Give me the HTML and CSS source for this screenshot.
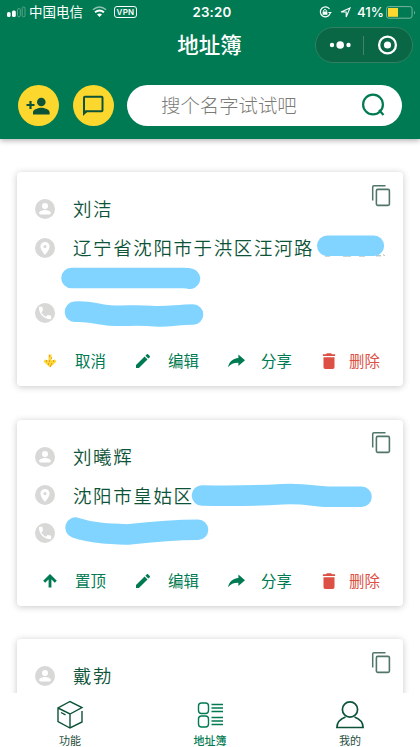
FILE: index.html
```html
<!DOCTYPE html>
<html lang="zh-CN">
<head>
<meta charset="utf-8">
<title>地址簿</title>
<link rel="stylesheet" href="styles.css">
</head>
<body>
<svg class="defs" width="0" height="0">
  <defs>
    <symbol id="person" viewBox="0 0 20 20"><circle cx="10" cy="10" r="10" fill="#d8d8d6"/><circle cx="10" cy="7" r="3" fill="#fff"/><path d="M4 14.2c0-2.1 4-3.2 6-3.2s6 1.1 6 3.2q-.5 1.1-1.500 1.300h-9Q4.500 15.300 4 14.200z" fill="#fff"/></symbol>
    <symbol id="pin" viewBox="0 0 20 20"><circle cx="10" cy="10" r="10" fill="#d8d8d6"/><path d="M10 4a4.600 4.600 0 0 0-4.600 4.600C5.400 12 10 17 10 17s4.600-5 4.600-8.400A4.600 4.600 0 0 0 10 4zm0 6.200a1.600 1.600 0 1 1 0-3.200 1.600 1.600 0 0 1 0 3.200z" fill="#fff"/></symbol>
    <symbol id="phone" viewBox="0 0 20 20"><circle cx="10" cy="10" r="10" fill="#d8d8d6"/><path transform="translate(1.800 1.800) scale(.685)" d="M6.620 10.790c1.440 2.830 3.760 5.140 6.590 6.590l2.200-2.200c.27-.27.67-.36 1.020-.24 1.120.37 2.330.57 3.570.57.55 0 1 .45 1 1V20c0 .55-.45 1-1 1-9.390 0-17-7.610-17-17 0-.55.45-1 1-1h3.500c.55 0 1 .45 1 1 0 1.250.2 2.450.57 3.570.11.35.03.74-.25 1.020z" fill="#fff"/></symbol>
    <symbol id="copy" viewBox="0 0 20 23"><path d="M1.700 16.500V3q0-1.300 1.300-1.300h11.500" fill="none" stroke="#527569" stroke-width="1.500"/><rect x="5.400" y="5.400" width="13" height="16" rx="1.300" fill="none" stroke="#527569" stroke-width="1.600"/></symbol>
    <symbol id="edit" viewBox="3 3 18 18"><path fill="currentColor" d="M3 17.250V21h3.750L17.810 9.940l-3.750-3.750zM20.710 7.040a1 1 0 0 0 0-1.410l-2.340-2.340a1 1 0 0 0-1.410 0l-1.830 1.830 3.750 3.750z"/></symbol>
    <symbol id="share" viewBox="0 0 18 14"><path fill="currentColor" d="M11 0l7 6.200-7 6.200V8.800C6 8.700 3 10 0 13.500 1.200 8 5 4.500 11 3.900z"/></symbol>
    <symbol id="trash" viewBox="0 0 14 16"><path fill="currentColor" d="M1.500 4.200h11v10q0 1.800-1.800 1.800H3.300q-1.800 0-1.800-1.800zM.9 1.200H4l1-1h4l1 1h3.100v1.900H.9z"/></symbol>
    <symbol id="arrow" viewBox="0 0 14 14"><path fill="none" stroke="currentColor" stroke-width="2.800" d="M7 13.500V2.500M1.200 7.800L7 2l5.800 5.800"/></symbol>
  </defs>
</svg>
<div class="screen">
  <header class="header">
    <div class="status">
      <div class="status-left">
        <svg width="20" height="12" viewBox="0 0 20 12"><rect x="1" y="6" width="3.600" height="5" rx="1.500" fill="#fff"/><rect x="6" y="4.500" width="3.800" height="6.500" rx="1.500" fill="#fff"/><rect x="11.500" y="2.500" width="2.800" height="8.300" rx="1.300" fill="none" stroke="#6eae96" stroke-width=".8"/><rect x="16.200" y="1" width="2.800" height="9.800" rx="1.300" fill="none" stroke="#6eae96" stroke-width=".8"/></svg>
        <span class="carrier">中国电信</span>
        <svg class="wifi" width="15" height="12" viewBox="0 0 15 12"><path d="M.9 3.800Q7.500-1.800 14.100 3.800" fill="none" stroke="#8fc4b0" stroke-width="1.400"/><path d="M3 6.300q4.500-3.800 9 0" fill="none" stroke="#fff" stroke-width="1.900"/><path d="M5 8.500q2.500-2 5 0L7.500 11z" fill="#fff"/></svg>
        <span class="vpn">VPN</span>
      </div>
      <span class="clock">23:20</span>
      <div class="status-right">
        <svg width="13" height="12" viewBox="0 0 13 12"><path d="M10.500 3A5 5 0 1 0 10.900 8" fill="none" stroke="#fff" stroke-width="1.200"/><path d="M9 6h3.900L11 8.300zM3.600 5.500h4.800v3.300H3.600z" fill="#fff"/><path d="M4.600 5.500V4.300q1.400-1.800 2.800 0v1.200" fill="none" stroke="#fff"/></svg>
        <svg class="locate" width="11" height="11" viewBox="0 0 11 11"><path d="M1 5L10 1 6.200 10V5z" fill="none" stroke="#fff" stroke-width="1.100"/></svg>
        <span class="percent">41%</span>
        <svg width="30" height="13" viewBox="0 0 30 13"><rect x=".6" y=".6" width="25.500" height="11.600" rx="2.200" fill="none" stroke="#77b49e"/><rect x="2" y="2" width="10" height="8.800" fill="#fcd72e"/><path d="M28 4.500q1.500 2 0 4z" fill="#8fc4b0"/></svg>
      </div>
    </div>
    <div class="nav">
      <h1 class="title">地址簿</h1>
      <div class="capsule">
        <svg width="98" height="36" viewBox="0 0 98 36"><g fill="#fff"><circle cx="17" cy="18" r="2.200"/><circle cx="25.200" cy="18" r="3.800"/><circle cx="33.500" cy="18" r="2.200"/><circle cx="72.500" cy="18" r="3.600"/></g><path d="M48.500 9v19" stroke="#448366" stroke-width="1"/><circle cx="72.500" cy="18" r="8.400" fill="none" stroke="#fff" stroke-width="2.300"/></svg>
      </div>
    </div>
    <div class="tools">
      <div class="round"><svg width="24" height="18" viewBox="0 0 24 18" fill="#0d5338"><circle cx="15.300" cy="5" r="4.300"/><path d="M7 17.500v-2.200c0-3 5.600-4.600 8.300-4.600s8.300 1.600 8.300 4.600v2.200zM3.400 4h2.200v2.900h2.900v2.200H5.600V12H3.400V9.100H.5V6.900h2.900z"/></svg></div>
      <div class="round"><svg width="22" height="21" viewBox="0 0 22 21"><path d="M2 18V2.800q0-1 1-1h16.500q1 0 1 1v12.400q0 1-1 1H4.500z" fill="none" stroke="#0d5338" stroke-width="2"/><path d="M1 15v6l5-5z" fill="#0d5338"/></svg></div>
      <div class="search">
        <span class="placeholder">搜个名字试试吧</span>
        <svg width="25" height="25" viewBox="0 0 25 25" fill="none" stroke="#007a52" stroke-width="2.200"><circle cx="12" cy="11.500" r="9.900"/><path d="M18 17l4.500 5"/></svg>
      </div>
    </div>
  </header>

  <main class="list">
    <article class="card">
      <svg class="copy"><use href="#copy"/></svg>
      <div class="row name"><svg class="badge"><use href="#person"/></svg><span>刘洁</span></div>
      <div class="row address two-line"><svg class="badge"><use href="#pin"/></svg><span>辽宁省沈阳市于洪区汪河路</span></div>
      <div class="row"><svg class="badge"><use href="#phone"/></svg></div>
      <svg class="smears" width="386" height="214" viewBox="0 0 386 214"><path d="M308 84h5M326 84h8M342 84h6M359 83.800h5M366.500 82.500l1 1.500" stroke="#7d9c90" stroke-width=".8"/><g fill="none" stroke="#80d4ff" stroke-width="20.600" stroke-linecap="round" stroke-linejoin="round"><path d="M310.300 73.800h46.500"/><path d="M54.500 106H166q5 0 7 .7"/><path d="M58 139.800C72 138.600 82 143 93 143.500c16 .7 28-.7 41 .6 17 1.400 25-1.500 42-1.600"/></g></svg>
      <div class="actions">
        <div class="action"><svg class="down" width="14" height="14" viewBox="0 0 14 14"><path d="M5.500.5h3v6L12 5.500l1.500 2L7 13.500.5 7.500 2 5.500l3.500 1z" fill="#fcd72e"/><path d="M6 2h1M8 4h1M3 7h1M6 7h1M10 7h1M5 10h1M8 10h1M7 12h1" stroke="#d9603d"/></svg><span>取消</span></div>
        <div class="action"><svg width="14" height="14"><use href="#edit"/></svg><span>编辑</span></div>
        <div class="action"><svg width="17" height="14"><use href="#share"/></svg><span>分享</span></div>
        <div class="action delete"><svg width="14" height="16"><use href="#trash"/></svg><span>删除</span></div>
      </div>
    </article>

    <article class="card">
      <svg class="copy"><use href="#copy"/></svg>
      <div class="row name"><svg class="badge"><use href="#person"/></svg><span>刘曦辉</span></div>
      <div class="row address"><svg class="badge"><use href="#pin"/></svg><span>沈阳市皇姑区</span></div>
      <div class="row"><svg class="badge"><use href="#phone"/></svg></div>
      <svg class="smears" width="386" height="186" viewBox="0 0 386 186"><g fill="none" stroke="#80d4ff" stroke-width="20.600" stroke-linecap="round" stroke-linejoin="round"><path d="M185 75.500C220 76 245 75.500 265 74.300c24-1.300 32 2.400 46 2.400h33.500"/><path d="M58.500 107.700C76 113.500 93 114 110 114.500c15-1.700 42-4.800 71-4.800"/></g></svg>
      <div class="actions">
        <div class="action"><svg width="14" height="14"><use href="#arrow"/></svg><span>置顶</span></div>
        <div class="action"><svg width="14" height="14"><use href="#edit"/></svg><span>编辑</span></div>
        <div class="action"><svg width="17" height="14"><use href="#share"/></svg><span>分享</span></div>
        <div class="action delete"><svg width="14" height="16"><use href="#trash"/></svg><span>删除</span></div>
      </div>
    </article>

    <article class="card">
      <svg class="copy"><use href="#copy"/></svg>
      <div class="row name"><svg class="badge"><use href="#person"/></svg><span>戴勃</span></div>
    </article>
  </main>

  <nav class="tabs">
    <div class="tab"><svg width="28" height="29" viewBox="0 0 28 29" fill="none" stroke="#0d5338" stroke-width="1.400"><path d="M26 11v11L14 28 2 21.500V8L14 1.500 26 7.500 14 14 2 8M14 14v14M5 12.500l4.500 2.300"/></svg><span>功能</span></div>
    <div class="tab active"><svg width="28" height="29" viewBox="0 0 28 29" fill="none" stroke="#007a52" stroke-width="1.400"><rect x="2.500" y="3" width="10" height="10.500" rx="3"/><rect x="2.500" y="16" width="10" height="11" rx="3"/><path d="M15.500 4.500H27M15.500 8H27M15.500 11.500H27M15.500 17.500H27M15.500 21H27M15.500 24.500H27"/></svg><span>地址簿</span></div>
    <div class="tab"><svg width="28" height="29" viewBox="0 0 28 29" fill="none" stroke="#0d5338" stroke-width="1.700"><circle cx="14" cy="9.500" r="7.600"/><path d="M9.500 17C4 19 1 23 .9 27.500h26.200C27 23 24 19 18.500 17"/></svg><span>我的</span></div>
  </nav>
</div>
</body>
</html>
```
FILE: styles.css
```css
* { box-sizing: border-box; }
body { margin: 0; font-family: "Noto Sans CJK SC", sans-serif; background: #fff; }
svg { display: block; flex: none; }
.defs { position: absolute; }
.screen { height: 747px; overflow: hidden; display: flex; flex-direction: column; }

.header { position: relative; flex: none; height: 139px; background: #007a52; color: #fff; box-shadow: 0 2px 5px rgba(0, 0, 0, .28); }
.status { height: 24px; display: grid; grid-template-columns: 1fr auto 1fr; align-items: center; padding: 0 4px 0 6px; }
.status-left, .status-right { display: flex; align-items: center; }
.status-right { justify-content: flex-end; }
.carrier { font-size: 13.500px; line-height: 22px; margin: -2px 0 0 3px; }
.wifi { margin-left: 9px; }
.vpn { margin-left: 7px; width: 23px; height: 12px; border: 1px solid #fff; border-radius: 3px; font: 600 8px/10px Inter, sans-serif; text-align: center; letter-spacing: .3px; }
.clock { font: 600 13.300px/24px Inter, sans-serif; letter-spacing: .2px; padding-left: 2px; }
.locate { margin-left: 8px; }
.percent { font: 500 13.300px/24px Inter, sans-serif; margin: -1px 2px 0 6px; }
.nav { height: 42px; display: grid; grid-template-columns: 1fr auto 1fr; align-items: center; padding-right: 7px; }
.title { grid-column: 2; margin: -2px 0 0 6px; font-size: 21.500px; line-height: 32px; font-weight: 500; }
.capsule { justify-self: end; width: 98px; height: 36px; border-radius: 18px; background: #096746; border: 1px solid #327f63; }
.capsule svg { margin: -1px; }
.tools { display: flex; align-items: center; margin-top: 19px; padding: 0 18px; gap: 14px; }
.round { width: 41px; height: 41px; border-radius: 50%; background: #fcd72e; display: flex; align-items: center; justify-content: center; }
.round svg { margin-left: -1px; }
.search { flex: 1; height: 41px; border-radius: 21px; background: #fff; display: flex; align-items: center; justify-content: space-between; padding: 0 16px 0 34px; margin-left: -1px; }
.placeholder { color: #7b7b76; font-size: 19.400px; font-weight: 300; line-height: 30px; margin-top: -2px; }

.list { flex: 1; min-height: 0; overflow: hidden; padding: 33px 17px 0; display: flex; flex-direction: column; gap: 33.500px; }
.card { position: relative; flex: none; min-height: 186px; border-radius: 4px; background: #fff; padding: 22px 18px 13px; box-shadow: 0 1px 7px rgba(0, 0, 0, .22); }
.copy { position: absolute; top: 11.500px; right: 12.500px; width: 20px; height: 23px; }
.smears { position: absolute; left: 0; top: 0; }
.row { display: flex; align-items: flex-start; height: 30px; color: #0d5338; font-size: 18.500px; font-weight: 350; line-height: 30px; letter-spacing: 1.600px; }
.row span { margin: -1px 0 0 18px; white-space: nowrap; }
.badge { width: 20px; height: 20px; margin-top: 5px; }
.name { margin-bottom: 9px; }
.address { margin-bottom: 7px; }
.two-line { height: 58px; }
.address .badge { margin-top: 4.500px; }
.actions { display: grid; grid-template-columns: 93px 93px 93px 1fr; height: 24px; margin: 21px -17px 0 6px; }
.action { display: grid; grid-template-columns: 18px auto; column-gap: 16px; align-items: center; justify-content: start; color: #007a52; font-size: 15.400px; line-height: 24px; }
.action svg { margin: 0 auto; }
.action span { margin-top: -2px; }
.delete { color: #dc5046; column-gap: 11px; }

.tabs { flex: none; position: relative; height: 54px; background: #fff; display: grid; grid-template-columns: repeat(3, 1fr); }
.tab { display: flex; flex-direction: column; align-items: center; padding-top: 7px; font-size: 11px; line-height: 16px; gap: 3px; color: #284f3e; }
.tab:first-child svg, .tab:last-child svg { margin-left: -1px; }
.active { color: #007a52; font-weight: 500; }
```
